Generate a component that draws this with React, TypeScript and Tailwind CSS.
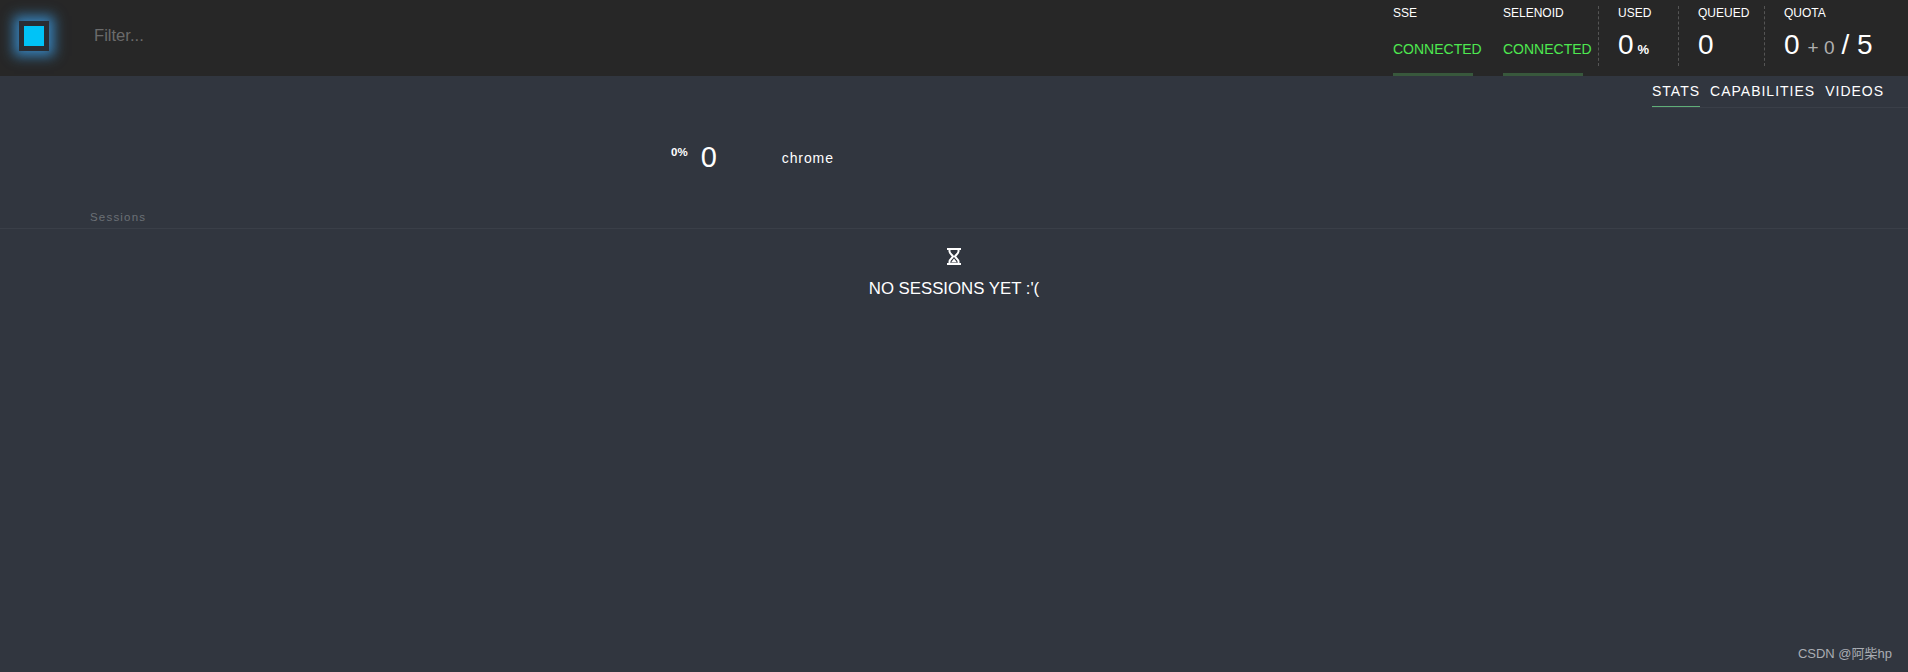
import React from 'react';

const font = { fontFamily: '"Liberation Sans", "Noto Sans CJK SC", sans-serif' };

function Connection({ name, width }: { name: string; width: string }) {
  return (
    <div className={`relative h-[76px] ${width}`}>
      <p className="pt-[6px] text-[12px] leading-[14px] text-white">{name}</p>
      <p className="mt-[20px] text-[14px] leading-[18px] text-[#4ee850]">CONNECTED</p>
      <div className="absolute bottom-0 left-0 h-[3px] w-[80px] bg-[#38583c]" />
    </div>
  );
}

function Metric({ name, width, children }: { name: string; width: string; children: React.ReactNode }) {
  return (
    <div className={`h-[60px] border-l border-dashed border-[#555] pl-[19px] ${width}`}>
      <p className="text-[12px] leading-[14px] text-white">{name}</p>
      <div className="mt-[8px] flex items-baseline text-[28px] leading-[34px] text-white">{children}</div>
    </div>
  );
}

export default function App() {
  return (
    <div style={font} className="relative flex h-[672px] flex-col overflow-hidden bg-[#31363f] text-white">
      <header className="flex h-[76px] shrink-0 items-start bg-[#272727]">
        <div className="ml-[19px] mt-[21px] flex h-[30px] w-[30px] items-center justify-center bg-[#2a2d33] shadow-[0_0_12px_5px_rgba(60,160,235,0.75)]">
          <div className="h-[20px] w-[20px] bg-[#00c3f7]" />
        </div>
        <p className="ml-[45px] mt-[26px] text-[16.6px] leading-[20px] text-[#6b6b6b]">Filter...</p>
        <div className="ml-auto flex">
          <Connection name="SSE" width="w-[110px]" />
          <Connection name="SELENOID" width="w-[95px]" />
          <div className="flex pt-[6px]">
            <Metric name="USED" width="w-[80px]">
              0<span className="ml-[4px] text-[13px] font-bold">%</span>
            </Metric>
            <Metric name="QUEUED" width="w-[86px]">0</Metric>
            <Metric name="QUOTA" width="w-[144px]">
              0
              <span className="ml-[8px] text-[19px] text-[#b0b0b0]">+ 0</span>
              <span className="ml-[7px]">/ 5</span>
            </Metric>
          </div>
        </div>
      </header>

      <div className="flex h-[32px] shrink-0 justify-end">
        <div className="flex w-[256px] gap-[10px] border-b border-[#3a3f48] text-[14px] leading-[30px] tracking-[1px]">
          <span className="h-[31px] border-b border-[#5fae78]">STATS</span>
          <span>CAPABILITIES</span>
          <span>VIDEOS</span>
        </div>
      </div>

      <section className="flex h-[121px] shrink-0 flex-col border-b border-[#3a3f48]">
        <div className="ml-[671px] mt-[31px] flex items-start">
          <span className="mt-[6px] text-[11.5px] font-bold leading-[14px]">0%</span>
          <span className="ml-[13px] text-[29px] leading-[36px]">0</span>
          <span className="ml-[65px] mt-[11px] text-[14px] leading-[16px] tracking-[0.9px]">chrome</span>
        </div>
        <p className="ml-[90px] mt-auto pb-[4px] text-[11.5px] leading-[14px] tracking-[1.2px] text-[#6b7076]">Sessions</p>
      </section>

      <section className="flex flex-col items-center pt-[19px]">
        <svg viewBox="0 0 14 17" className="h-[17px] w-[14px]" fill="none" stroke="white">
          <path d="M0 1h14M0 16h14" strokeWidth="2" />
          <path d="M2.5 1v2.5c0 2 2.6 3.4 3.6 5-1 1.6-3.6 3-3.6 5V16M11.5 1v2.5c0 2-2.6 3.4-3.6 5 1 1.6 3.6 3 3.6 5V16" strokeWidth="2" />
          <path d="M4 14.5 7 10.5l3 4z" fill="white" stroke="none" />
        </svg>
        <p className="mt-[14px] text-[16.8px] leading-[20px]">NO SESSIONS YET :'(</p>
      </section>

      <p className="absolute bottom-[10px] right-[16px] text-[13px] leading-[16px] text-[#a9adb3]">CSDN @阿柴hp</p>
    </div>
  );
}
